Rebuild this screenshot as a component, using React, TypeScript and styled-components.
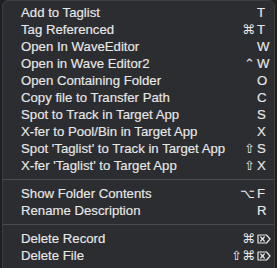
import React from "react";
import styled, { createGlobalStyle } from "styled-components";

const Global = createGlobalStyle`
  html, body { margin: 0; padding: 0; background: #1f1f21; }
  body { width: 277px; height: 268px; overflow: hidden; }
`;

const Menu = styled.div`
  margin-left: 2px;
  width: 273px;
  height: 290px;
  box-sizing: border-box;
  padding-top: 3px;
  background: #2c2d30;
  border: 1px solid #3c3d40;
  border-radius: 6px;
  font-family: "Liberation Sans", Arial, sans-serif;
  font-size: 13.2px;
  color: #e8e8e9;
  -webkit-text-stroke: 0.15px #e8e8e9;
`;

const Row = styled.div`
  display: grid;
  grid-template-columns: 1fr auto 15px;
  align-items: center;
  height: 17px;
  line-height: 17px;
  padding-left: 18px;
  padding-right: 2px;
  white-space: nowrap;
`;

const Label = styled.span``;

const Mods = styled.span`
  font-family: "DejaVu Sans", sans-serif;
  font-size: 13px;
  text-align: right;
  padding-right: 2px;
  -webkit-text-stroke: 0;
`;

const Key = styled.span`
  display: flex;
  align-items: center;
`;

const Separator = styled.div`
  height: 11px;
  display: flex;
  align-items: center;
  &::after {
    content: "";
    flex: 1;
    height: 1px;
    background: #4a4b4e;
  }
`;

const DeleteGlyph = () => (
  <svg width="14" height="10" viewBox="0 0 14 10">
    <path d="M1 1 H9.5 L13 5 L9.5 9 H1 Z" fill="none" stroke="#e8e8e9" strokeWidth="1.2" strokeLinejoin="round" />
    <path d="M3.7 3 L7.3 7 M7.3 3 L3.7 7" stroke="#e8e8e9" strokeWidth="1.2" strokeLinecap="round" />
  </svg>
);

type Item = { label: string; mods?: string; key: React.ReactNode } | "sep";

const items: Item[] = [
  { label: "Add to Taglist", key: "T" },
  { label: "Tag Referenced", mods: "⌘", key: "T" },
  { label: "Open In WaveEditor", key: "W" },
  { label: "Open in Wave Editor2", mods: "⌃", key: "W" },
  { label: "Open Containing Folder", key: "O" },
  { label: "Copy file to Transfer Path", key: "C" },
  { label: "Spot to Track in Target App", key: "S" },
  { label: "X-fer to Pool/Bin in Target App", key: "X" },
  { label: "Spot 'Taglist' to Track in Target App", mods: "⇧", key: "S" },
  { label: "X-fer 'Taglist' to Target App", mods: "⇧", key: "X" },
  "sep",
  { label: "Show Folder Contents", mods: "⌥", key: "F" },
  { label: "Rename Description", key: "R" },
  "sep",
  { label: "Delete Record", mods: "⌘", key: <DeleteGlyph /> },
  { label: "Delete File", mods: "⇧⌘", key: <DeleteGlyph /> },
];

export default function App() {
  return (
    <>
      <Global />
      <Menu>
        {items.map((it, i) =>
          it === "sep" ? (
            <Separator key={i} />
          ) : (
            <Row key={i}>
              <Label>{it.label}</Label>
              <Mods>{it.mods ?? ""}</Mods>
              <Key>{it.key}</Key>
            </Row>
          )
        )}
      </Menu>
    </>
  );
}
